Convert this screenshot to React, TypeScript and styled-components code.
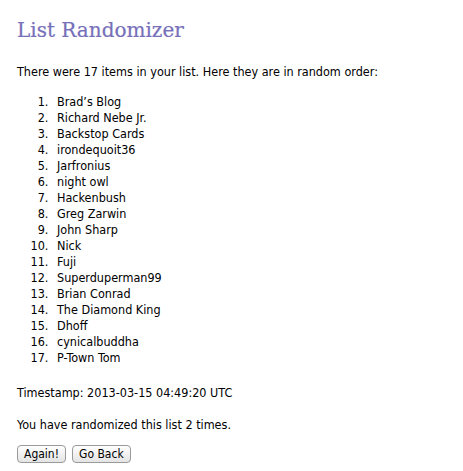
import styled, { createGlobalStyle } from "styled-components";

const GlobalStyle = createGlobalStyle`
    body {
        margin: 0;
        background: #fff;
        color: #000;
        font-family: "DejaVu Sans Condensed", "DejaVu Sans", sans-serif;
        font-size: 12.5px;
    }
`;

const Page = styled.div`
    padding: 13px 17px 0 17px;
`;

const Title = styled.h1`
    margin: 0 0 17px 0;
    font-family: "DejaVu Serif", "Liberation Serif", serif;
    font-weight: normal;
    font-size: 20px;
    line-height: 34px;
    color: #7670b9;
    -webkit-text-stroke: 0.2px #7670b9;
`;

const Text = styled.p<{ $gap?: number }>`
    margin: 0 0 ${(p) => p.$gap ?? 16}px 0;
    line-height: 16px;
`;

const List = styled.ol`
    margin: 0 0 19px 0;
    padding-left: 35px;
    line-height: 16px;

    li {
        padding-left: 5px;
    }
`;

const Buttons = styled.div`
    display: flex;
    gap: 6px;
`;

const Button = styled.button`
    font-family: inherit;
    font-size: 12px;
    height: 18px;
    padding: 0 6px;
    border: 1px solid #9a9a9a;
    border-radius: 4px;
    background: linear-gradient(#ffffff, #e4e4e4);
    color: #000;
`;

const items = [
    "Brad’s Blog",
    "Richard Nebe Jr.",
    "Backstop Cards",
    "irondequoit36",
    "Jarfronius",
    "night owl",
    "Hackenbush",
    "Greg Zarwin",
    "John Sharp",
    "Nick",
    "Fuji",
    "Superduperman99",
    "Brian Conrad",
    "The Diamond King",
    "Dhoff",
    "cynicalbuddha",
    "P-Town Tom",
];

function App() {
    return (
        <Page>
            <GlobalStyle />
            <Title>List Randomizer</Title>
            <Text $gap={14}>There were 17 items in your list. Here they are in random order:</Text>
            <List>
                {items.map((item) => (
                    <li key={item}>{item}</li>
                ))}
            </List>
            <Text>Timestamp: 2013-03-15 04:49:20 UTC</Text>
            <Text $gap={12}>You have randomized this list 2 times.</Text>
            <Buttons>
                <Button>Again!</Button>
                <Button>Go Back</Button>
            </Buttons>
        </Page>
    );
}

export default App;
